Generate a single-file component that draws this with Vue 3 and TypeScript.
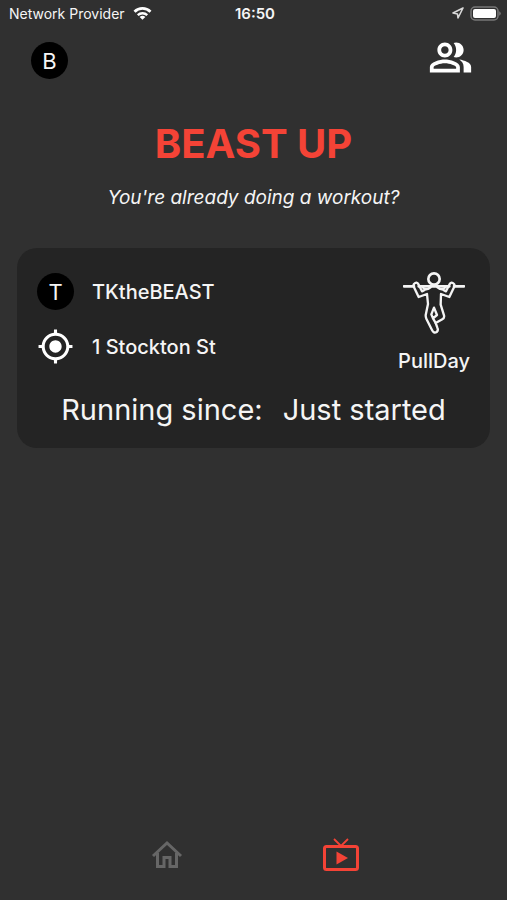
<script setup lang="ts">
interface Workout {
  user: string
  place: string
  kind: string
  since: string
}

const workout: Workout = {
  user: 'TKtheBEAST',
  place: '1 Stockton St',
  kind: 'PullDay',
  since: 'Just started',
}
</script>

<template>
  <div class="screen">
    <div class="status">
      <div class="carrier">
        <span>Network Provider</span>
        <svg width="19" height="14" viewBox="0 0 20 14" fill="none" stroke="#fff" stroke-width="3">
          <path d="M1.6 5.6a12 12 0 0 1 16.8 0" />
          <path d="M5 9.3a7.2 7.2 0 0 1 10 0" stroke-width="2.5" />
          <path d="M7 11.2a4.4 4.4 0 0 1 6 0L10 14z" fill="#fff" stroke="none" />
        </svg>
      </div>
      <time class="clock">16:50</time>
      <div class="power">
        <svg width="12" height="12" viewBox="0 0 12 12" fill="none" stroke="#d8d8d8" stroke-width="1.6" stroke-linejoin="round">
          <path d="M11 1 1 6l4.500 1L6 11z" />
        </svg>
        <svg width="31" height="15" viewBox="0 0 31 15">
          <rect x="1" y="1" width="27" height="13" rx="4" fill="none" stroke="#777" stroke-width="1.5" />
          <rect x="3" y="3" width="23" height="9" rx="2" fill="#fff" />
          <path d="M29.2 5.2q1.6.8 1.6 2.3t-1.6 2.3z" fill="#777" />
        </svg>
      </div>
    </div>

    <header class="top">
      <button class="avatar" type="button" aria-label="Profile">B</button>
      <button class="icon-button" type="button" aria-label="Friends">
        <svg width="45" height="45" viewBox="0 0 24 24" fill="#fff">
          <path d="M16.67 13.13C18.04 14.06 19 15.32 19 17v3h4v-3c0-2.18-3.57-3.47-6.33-3.87z" />
          <path d="M15 12c2.21 0 4-1.79 4-4s-1.79-4-4-4c-.47 0-.91.1-1.33.24C14.5 5.27 15 6.58 15 8s-.5 2.73-1.33 3.76c.42.14.86.24 1.33.24z" />
          <path d="M9 12c2.21 0 4-1.79 4-4s-1.79-4-4-4-4 1.79-4 4 1.79 4 4 4zm0-6c1.1 0 2 .9 2 2s-.9 2-2 2-2-.9-2-2 .9-2 2-2z" />
          <path d="M9 13c-2.67 0-8 1.34-8 4v3h16v-3c0-2.66-5.33-4-8-4zm6 5H3v-.99C3.2 16.29 6.3 15 9 15s5.8 1.29 6 2v1z" />
        </svg>
      </button>
    </header>

    <main class="content">
      <h1>BEAST UP</h1>
      <p class="question">You're already doing a workout?</p>

      <article class="card">
        <div class="details">
          <div class="facts">
            <div class="fact">
              <span class="avatar">T</span>
              <span>{{ workout.user }}</span>
            </div>
            <div class="fact">
              <svg width="37" height="37" viewBox="0 0 24 24" fill="#fff">
                <path d="M12 8c-2.21 0-4 1.79-4 4s1.79 4 4 4 4-1.79 4-4-1.79-4-4-4zm8.94 3c-.46-4.17-3.77-7.48-7.94-7.94V1h-2v2.06C6.83 3.52 3.52 6.83 3.06 11H1v2h2.06c.46 4.17 3.77 7.48 7.94 7.94V23h2v-2.06c4.17-.46 7.48-3.77 7.94-7.94H23v-2h-2.06zM12 19c-3.87 0-7-3.13-7-7s3.13-7 7-7 7 3.13 7 7-3.13 7-7 7z" />
              </svg>
              <span>{{ workout.place }}</span>
            </div>
          </div>
          <div class="kind">
            <svg width="62" height="62" viewBox="27 28 186 186" fill="none" stroke="#f4f4f4" stroke-width="7" stroke-linejoin="round" stroke-linecap="round">
              <circle cx="120" cy="49" r="17" stroke-width="8" />
              <path d="M30 71H60M74 71H166M180 71H210" stroke-width="8" />
              <path d="M92 82 84 86 74 66Q68 55 60 64Q57 68 60 74L74 103 99 94 102 124 95 158Q95 164 97 168L114 202Q119 213 128 208Q134 203 130 195L125 181 145 170Q152 166 150 158L140 126 141 94 166 103 180 74Q183 68 180 64Q172 55 166 66L156 86 148 82" />
              <path d="M86 74Q92 82 102 79L110 74M154 74Q148 82 138 79L130 74" />
              <path d="M120 135 129 157 117 167 112 155ZM125 181 117 167" />
            </svg>
            <span>{{ workout.kind }}</span>
          </div>
        </div>
        <p class="since">
          <span>Running since:</span>
          <span>{{ workout.since }}</span>
        </p>
      </article>
    </main>

    <nav class="tabs">
      <a href="#home" aria-label="Home">
        <svg width="32" height="32" viewBox="0 0 32 32" fill="none" stroke="#666" stroke-width="3">
          <path d="M2 17 16 4 30 17M6.500 14V27.500H13V18.500H19V27.500H25.500V14" />
        </svg>
      </a>
      <a href="#live" aria-label="Live workouts">
        <svg width="38" height="36" viewBox="0 0 38 36" fill="none" stroke="#f44336">
          <path d="M12 2 19 9 26 2" stroke-width="1.800" />
          <rect x="2.500" y="9.500" width="33" height="23" rx="2" stroke-width="3" />
          <path d="M14.500 14.500V27.500L26 21z" fill="#f44336" stroke="none" />
        </svg>
      </a>
    </nav>
  </div>
</template>

<style>
body {
  margin: 0;
  background: #303030;
}
</style>

<style scoped>
.screen {
  display: flex;
  flex-direction: column;
  min-height: 100vh;
  box-sizing: border-box;
  background: #303030;
  color: #f5f5f5;
  font-family: Inter, Roboto, sans-serif;
}

.status {
  display: grid;
  grid-template-columns: 1fr auto 1fr;
  align-items: center;
  height: 26px;
  padding: 0 6px 0 9px;
  font-size: 14px;
}

.carrier,
.power {
  display: flex;
  align-items: center;
  gap: 8px;
}

.power {
  justify-content: flex-end;
  gap: 6px;
}

.clock {
  font-size: 15px;
  font-weight: 600;
}

.top {
  display: flex;
  align-items: flex-end;
  justify-content: space-between;
  height: 54px;
  padding: 0 34px 12px 31px;
  box-sizing: border-box;
  height: 66px;
}

.top .avatar {
  margin-bottom: 1px;
}

.avatar {
  display: flex;
  align-items: center;
  justify-content: center;
  width: 37px;
  height: 37px;
  padding: 0;
  border: 0;
  border-radius: 50%;
  background: #000;
  color: #f5f5f5;
  font: inherit;
  font-size: 22px;
}

.icon-button {
  display: flex;
  padding: 0;
  border: 0;
  background: none;
}

.content {
  flex: 1;
  padding: 26px 17px;
}

h1 {
  margin: 0;
  color: #f44336;
  font-size: 40px;
  font-weight: 700;
  line-height: 52px;
  text-align: center;
}

.question {
  margin: 16px 0 38px;
  font-size: 19px;
  font-style: italic;
  line-height: 24px;
  text-align: center;
}

.card {
  padding: 24px 20px 20px;
  border-radius: 20px;
  background: #242424;
}

.details {
  display: flex;
  justify-content: space-between;
  font-size: 20px;
  font-weight: 500;
  line-height: 26px;
}

.facts {
  display: flex;
  flex-direction: column;
  gap: 18px;
  padding-top: 1px;
}

.fact {
  display: flex;
  align-items: center;
  gap: 18px;
}

.fact .avatar {
  font-weight: 400;
}

.kind {
  display: flex;
  flex-direction: column;
  align-items: center;
  gap: 14px;
}

.since {
  display: flex;
  justify-content: center;
  gap: 20px;
  margin: 18px 0 0;
  font-size: 29px;
  line-height: 36px;
}

.tabs {
  display: flex;
  justify-content: center;
  gap: 130px;
  padding-bottom: 23px;
}

.tabs a {
  display: flex;
  align-items: center;
  justify-content: center;
  width: 44px;
  height: 44px;
}
</style>
